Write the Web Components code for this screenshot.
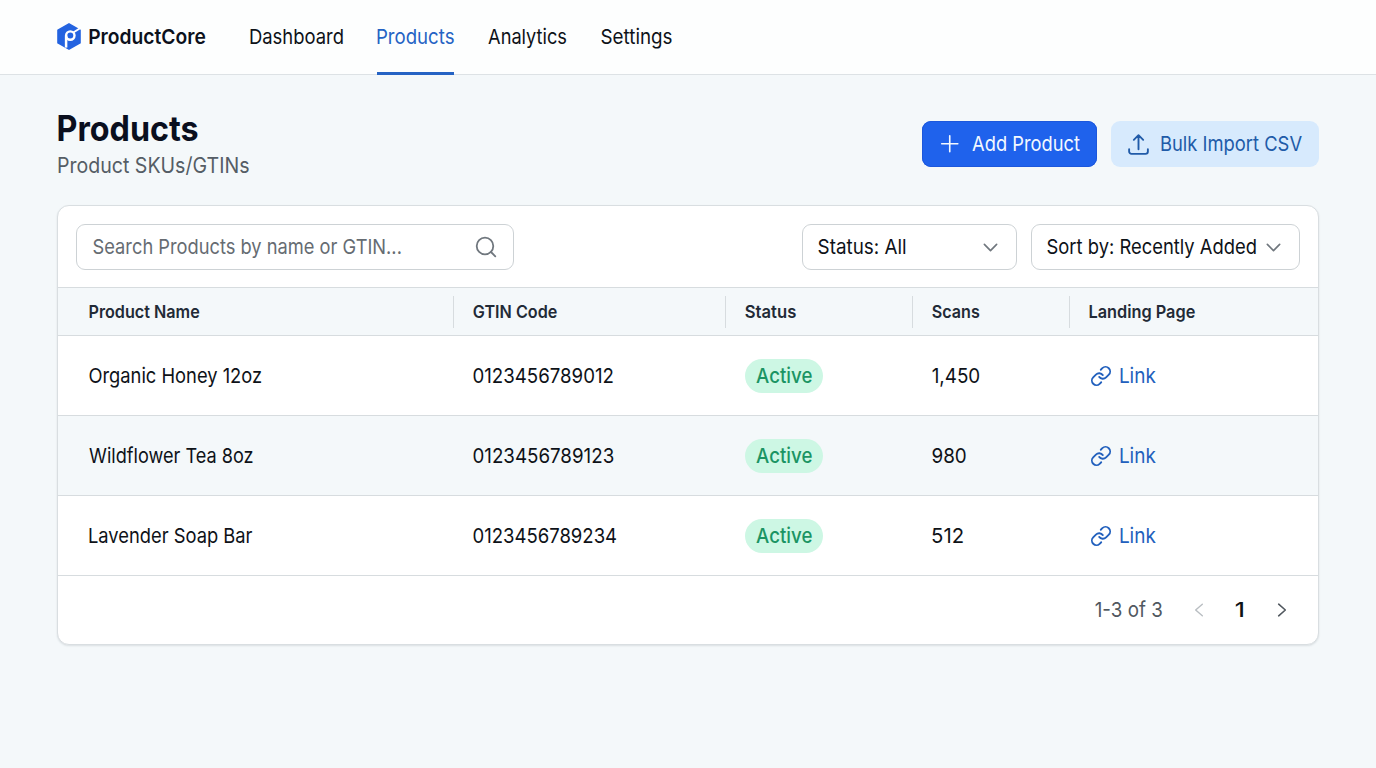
<!DOCTYPE html>
<html lang="en">
<head>
<meta charset="utf-8">
<title>ProductCore</title>
<style>
  body {
    margin: 0;
    min-height: 100vh;
    background: #f4f8fa;
    color: #0e1218;
    font-family: Inter, "Liberation Sans", sans-serif;
    font-size: 20.6px;
  }
</style>
</head>
<body>
<product-app></product-app>

<script>
// Each component gets its markup from a template string
function define(name, html, setup) {
  const template = document.createElement("template");
  template.innerHTML = html;
  window.customElements.define(name, class extends HTMLElement {
    connectedCallback() {
      if (this.shadowRoot) return;
      this.attachShadow({ mode: "open" });
      this.shadowRoot.appendChild(template.content.cloneNode(true));
      if (setup) setup(this, this.shadowRoot);
    }
  });
}

// Condensed label: the text is scaled so its ink is about `w` pixels wide
const pen = document.createElement("canvas").getContext("2d");
define("fit-text", `
<style>
  :host { display: block; flex: none; white-space: nowrap; line-height: 24px; }
  span { display: inline-block; transform-origin: 0 50%; vertical-align: top; }
</style>
<span><slot></slot></span>
`, (el, root) => {
  const style = getComputedStyle(el);
  // measured at 10x, since the glyph bounds come back as whole pixels
  pen.font = `${style.fontWeight} ${parseFloat(style.fontSize) * 10}px ${style.fontFamily}`;
  const m = pen.measureText(el.textContent);
  const width = Number(el.getAttribute("w"));
  const left = m.actualBoundingBoxLeft / 10;
  const scale = (width - 0.9) / (m.actualBoundingBoxRight / 10 + left);
  el.style.width = width + "px";
  root.querySelector("span").style.transform = `scaleX(${scale}) translateX(${left + 0.6}px)`;
});

const icons = {
  plus: `<path d="M12 3v18M3 12h18"/>`,
  upload: `<path d="M3 16.5v2.25A2.25 2.25 0 0 0 5.25 21h13.5A2.25 2.25 0 0 0 21 18.75V16.5M7.5 7.5 12 3l4.5 4.5M12 3v13.5"/>`,
  search: `<circle cx="11" cy="11" r="8.3"/><path d="m17 17 4.3 4.3"/>`,
  down: `<path d="m5 8.5 7 7 7-7"/>`,
  left: `<path d="m16 5-8 7 8 7"/>`,
  right: `<path d="m8 5 8 7-8 7"/>`,
  link: `<path d="M10 13a5 5 0 0 0 7.54.54l3-3a5 5 0 0 0-7.07-7.07l-1.72 1.71M14 11a5 5 0 0 0-7.54-.54l-3 3a5 5 0 0 0 7.07 7.07l1.71-1.71"/>`
};

define("app-icon", `
<style>
  :host { display: block; flex: none; }
  svg { display: block; width: 100%; height: 100%; fill: none; stroke: currentColor; stroke-linecap: round; stroke-linejoin: round; }
</style>
<svg viewBox="0 0 24 24"></svg>
`, (el, root) => {
  const size = el.getAttribute("size") || 24;
  el.style.width = el.style.height = size + "px";
  const svg = root.querySelector("svg");
  svg.setAttribute("stroke-width", el.getAttribute("stroke") || 1.6);
  svg.innerHTML = icons[el.getAttribute("name")];
});

define("brand-logo", `
<style>
  :host { display: flex; align-items: center; height: 73px; gap: 7.5px; font-weight: 600; color: #0c111c; }
  svg { display: block; width: 24px; height: 27px; }
</style>
<svg viewBox="0 0 24 27">
  <path d="M12 .9 23 7.1v12.8L12 26.1 1 19.9V7.1Z" fill="#2463e0" stroke="#2463e0" stroke-width="1.6" stroke-linejoin="round"/>
  <circle cx="13.3" cy="12.6" r="4.2" fill="none" stroke="#fff" stroke-width="2.4"/>
  <path d="M9.1 12.6v12" fill="none" stroke="#fff" stroke-width="2.5"/>
  <path d="m16.3 9.4 7.4-4.6" fill="none" stroke="#fff" stroke-width="1.8"/>
</svg>
<fit-text w="116.5">ProductCore</fit-text>
`);

define("nav-item", `
<style>
  :host { display: flex; align-items: center; height: 75px; box-sizing: border-box; padding-top: 1px; border-bottom: 3px solid transparent; }
  :host([active]) { color: #2563c4; border-bottom-color: #2563c4; }
</style>
<slot></slot>
`);

define("top-bar", `
<style>
  :host { display: flex; box-sizing: border-box; height: 75px; padding-left: 57px; background: #fdfefe; border-bottom: 1px solid #dde2e5; }
  nav { display: flex; gap: 34px; margin-left: 45px; height: 75px; }
</style>
<brand-logo></brand-logo>
<nav>
  <nav-item><fit-text w="93">Dashboard</fit-text></nav-item>
  <nav-item active><fit-text w="77">Products</fit-text></nav-item>
  <nav-item><fit-text w="78.5">Analytics</fit-text></nav-item>
  <nav-item><fit-text w="71">Settings</fit-text></nav-item>
</nav>
`);

define("app-button", `
<style>
  :host { display: flex; align-items: center; box-sizing: border-box; height: 46px; padding: 0 17.5px 0 17px; border-radius: 9px; background: #d7eafd; color: #215ba8; }
  :host([primary]) { background: #1f62ec; color: #f3f8ff; box-shadow: inset 0 0 0 1px #1c57dc; }
</style>
<slot></slot>
`);

define("page-head", `
<style>
  :host { display: flex; justify-content: space-between; }
  .title { margin-left: .8px; font-size: 35.3px; font-weight: 700; line-height: 35px; color: #0a0f1e; }
  .sub { margin: 7px 0 0 .5px; font-size: 21.6px; line-height: 24px; color: #555d65; }
  .actions { display: flex; gap: 13.5px; margin-top: 10px; }
  .add { margin-left: 11px; }
  .bulk { margin-left: 9.5px; }
</style>
<div>
  <fit-text class="title" w="140">Products</fit-text>
  <fit-text class="sub" w="191">Product SKUs/GTINs</fit-text>
</div>
<div class="actions">
  <app-button primary><app-icon name="plus" size="21.5" stroke="1.8"></app-icon><fit-text class="add" w="108">Add Product</fit-text></app-button>
  <app-button style="padding-left: 15.5px"><app-icon name="upload" size="25" stroke="1.8"></app-icon><fit-text class="bulk" w="141">Bulk Import CSV</fit-text></app-button>
</div>
`);

define("field-box", `
<style>
  :host { display: flex; align-items: center; justify-content: space-between; box-sizing: border-box; height: 46px; padding: 0 15px 0 15.5px; background: #fff; border: 1px solid #cdd2d5; border-radius: 9px; }
</style>
<slot></slot>
`);

define("filter-bar", `
<style>
  :host { display: flex; align-items: center; gap: 14px; padding: 18px 18px 17px; height: 46px; }
  .search { width: 438px; margin-right: auto; color: #666c72; }
  .status { width: 215px; }
  .sort { width: 269.5px; }
  app-icon { color: #70777e; }
</style>
<field-box class="search"><fit-text w="308">Search Products by name or GTIN...</fit-text><app-icon name="search" size="24" stroke="1.8"></app-icon></field-box>
<field-box class="status"><fit-text w="87.5">Status: All</fit-text><app-icon name="down" size="21" stroke="1.9"></app-icon></field-box>
<field-box class="sort"><fit-text w="209">Sort by: Recently Added</fit-text><app-icon name="down" size="21" stroke="1.9"></app-icon></field-box>
`);

define("status-badge", `
<style>
  :host { display: flex; align-items: center; justify-content: center; width: 78px; height: 34px; border-radius: 17px; background: #cdf7e4; color: #1b9463; font-weight: 500; }
</style>
<fit-text w="56">Active</fit-text>
`);

define("table-row", `
<style>
  :host { display: grid; grid-template-columns: 395px 272px 187px 157px 1fr; align-items: center; box-sizing: border-box; height: 80px; border-bottom: 1px solid #d7dcdf; background: #fff; }
  :host([alt]) { background: #f4f8fa; }
  :host([head]) { height: 49px; padding: 0; font-size: 17.6px; font-weight: 600; color: #222a36; background: #f4f8fa; border-top: 1px solid #d7dcdf; }
  ::slotted(*) { display: flex; align-items: center; box-sizing: border-box; height: 32px; padding-left: 20px; }
  ::slotted(:first-child) { padding-left: 31px; }
</style>
<slot></slot>
`);

define("product-table", `
<style>
  :host { display: block; }
  table-row[head] div + div { border-left: 1px solid #d7dcdf; padding-left: 19px; }
  a { display: flex; align-items: center; gap: 8.5px; color: #2260bd; margin-left: .5px; }
  status-badge { flex: none; margin-left: -.5px; }
</style>
<table-row head>
  <div><fit-text w="110.5">Product Name</fit-text></div>
  <div><fit-text w="84">GTIN Code</fit-text></div>
  <div><fit-text w="51">Status</fit-text></div>
  <div><fit-text w="47.5">Scans</fit-text></div>
  <div><fit-text w="106">Landing Page</fit-text></div>
</table-row>
`, (el, root) => {
  const products = [
    ["Organic Honey 12oz", 172.5, "0123456789012", 140, "1,450", 47.5],
    ["Wildflower Tea 8oz", 164, "0123456789123", 140.5, "980", 34],
    ["Lavender Soap Bar", 163.5, "0123456789234", 143.5, "512", 31]
  ];
  products.forEach((p, i) => {
    root.appendChild(document.createRange().createContextualFragment(`
      <table-row ${i % 2 ? "alt" : ""}>
        <div><fit-text w="${p[1]}">${p[0]}</fit-text></div>
        <div><fit-text w="${p[3]}">${p[2]}</fit-text></div>
        <div><status-badge></status-badge></div>
        <div><fit-text w="${p[5]}">${p[4]}</fit-text></div>
        <div><a><app-icon name="link" size="22" stroke="2"></app-icon><fit-text w="36">Link</fit-text></a></div>
      </table-row>`));
  });
});

define("page-nav", `
<style>
  :host { display: flex; align-items: center; justify-content: flex-end; height: 68px; padding-right: 26px; color: #51585f; }
  .prev { margin-left: 27px; color: #b9bec2; }
  .current { margin: 0 29px 0 26px; font-weight: 500; color: #0e1218; }
</style>
<fit-text w="67">1-3 of 3</fit-text>
<app-icon class="prev" name="left" size="20" stroke="1.7"></app-icon>
<fit-text class="current" w="8">1</fit-text>
<app-icon name="right" size="20" stroke="1.9"></app-icon>
`);

define("product-card", `
<style>
  :host { display: block; margin-top: 28px; background: #fff; border: 1px solid #d9dee1; border-radius: 12px; overflow: hidden; box-shadow: 0 1px 2px rgba(30, 50, 60, .12); }
</style>
<filter-bar></filter-bar>
<product-table></product-table>
<page-nav></page-nav>
`);

define("product-app", `
<style>
  :host { display: block; }
  main { padding: 36px 57px 0; }
</style>
<top-bar></top-bar>
<main>
  <page-head></page-head>
  <product-card></product-card>
</main>
`);
</script>
</body>
</html>
